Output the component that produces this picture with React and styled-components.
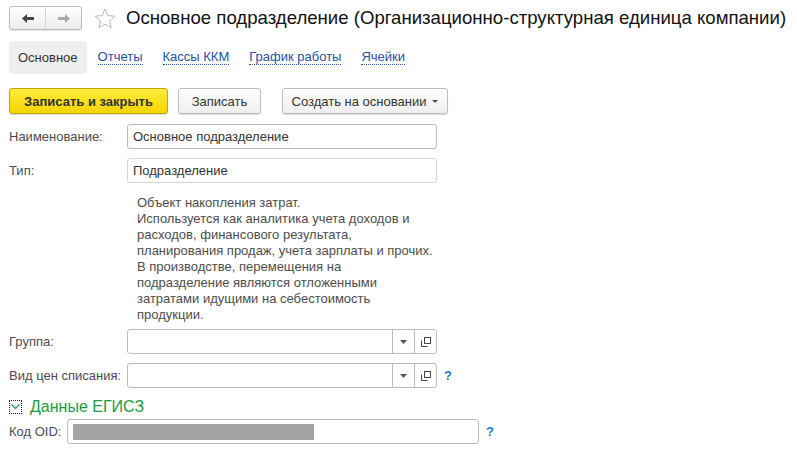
import React from 'react';
import styled, { createGlobalStyle } from 'styled-components';

const GlobalStyle = createGlobalStyle`
  body {
    margin: 0;
    background: #fff;
    font-family: "Liberation Sans", Arial, sans-serif;
    font-size: 13px;
    color: #4d4d4d;
  }
`;

const Page = styled.div`
  width: 797px;
  height: 453px;
  padding: 6px 0 0 9px;
  box-sizing: border-box;
  overflow: hidden;
`;

const Header = styled.div`
  display: flex;
  align-items: center;
  height: 24px;
`;

const NavGroup = styled.div`
  display: flex;
  width: 73px;
  height: 24px;
  box-sizing: border-box;
  border: 1px solid #bdbdbd;
  border-radius: 3px;
  background: linear-gradient(#ffffff, #ececec);
  box-shadow: 0 1px 1px rgba(0, 0, 0, 0.12);
`;

const NavButton = styled.div`
  flex: 1;
  display: flex;
  align-items: center;
  justify-content: center;
  & + & {
    border-left: 1px solid #d4d4d4;
  }
`;

const Star = styled.div`
  margin-left: 12px;
  display: flex;
`;

const Title = styled.h1`
  margin: 0 0 0 10px;
  font-size: 18.6px;
  font-weight: normal;
  color: #111;
  white-space: nowrap;
`;

const Tabs = styled.div`
  display: flex;
  align-items: center;
  margin-top: 11px;
  height: 33px;
`;

const Tab = styled.div`
  height: 33px;
  display: flex;
  align-items: center;
  padding: 0 9px 0 9px;
  border-radius: 3px;
  background: #efefef;
  color: #333;
`;

const TabLink = styled.a`
  margin-left: ${({ $gap }) => $gap}px;
  color: #2851a3;
  text-decoration: none;
  border-bottom: 1px dotted #2851a3;
  line-height: 14px;
`;

const Toolbar = styled.div`
  display: flex;
  margin-top: 14px;
  height: 26px;
`;

const Button = styled.div`
  height: 26px;
  box-sizing: border-box;
  display: flex;
  align-items: center;
  justify-content: center;
  width: ${({ $w }) => $w}px;
  margin-left: ${({ $ml }) => $ml || 0}px;
  border: 1px solid ${({ $primary }) => ($primary ? '#c2a700' : '#bdbdbd')};
  border-radius: 3px;
  background: ${({ $primary }) =>
    $primary ? 'linear-gradient(#ffec3d, #f5d400)' : 'linear-gradient(#ffffff, #efefef)'};
  box-shadow: 0 1px 1px rgba(0, 0, 0, 0.15);
  color: #333;
  font-weight: ${({ $primary }) => ($primary ? 'bold' : 'normal')};
  gap: 6px;
`;

const Caret = styled.span`
  width: 0;
  height: 0;
  border-left: 3px solid transparent;
  border-right: 3px solid transparent;
  border-top: 3px solid #555;
`;

const Row = styled.div`
  display: flex;
  align-items: center;
  margin-top: ${({ $mt }) => $mt}px;
  height: ${({ $h }) => $h || 25}px;
`;

const Label = styled.div`
  width: ${({ $w }) => $w || 118}px;
  flex-shrink: 0;
  color: #4d4d4d;
`;

const Input = styled.div`
  width: ${({ $w }) => $w || 310}px;
  height: 100%;
  box-sizing: border-box;
  border: 1px solid ${({ $strong }) => ($strong ? '#bcbcbc' : '#d6d6d6')};
  border-radius: 3px;
  display: flex;
  align-items: center;
  padding-left: 5px;
  color: #333;
`;

const Select = styled.div`
  width: 310px;
  height: 100%;
  box-sizing: border-box;
  border: 1px solid #bcbcbc;
  border-radius: 3px;
  display: flex;
`;

const SelectText = styled.div`
  flex: 1;
`;

const SelectBtn = styled.div`
  width: 21px;
  border-left: 1px solid #bcbcbc;
  display: flex;
  align-items: center;
  justify-content: center;
`;

const Help = styled.span`
  margin-left: ${({ $ml }) => $ml}px;
  color: #1f77c9;
  font-weight: bold;
  font-size: 13px;
`;

const Desc = styled.div`
  margin: 12px 0 0 128px;
  line-height: 16px;
  color: #4d4d4d;
`;

const Section = styled.div`
  display: flex;
  align-items: center;
  margin-top: 10px;
  height: 18px;
`;

const Check = styled.div`
  width: 13px;
  height: 14px;
  box-sizing: border-box;
  border: 1px dotted #222;
  display: flex;
  align-items: center;
  justify-content: center;
`;

const SectionTitle = styled.div`
  margin-left: 8px;
  font-size: 16px;
  color: #1a9c42;
`;

const Mask = styled.div`
  width: 241px;
  height: 16px;
  background: #a3a3a3;
`;

const CopyIcon = () => (
  <svg width="10" height="10" viewBox="0 0 10 10">
    <rect x="3.5" y="0.5" width="6" height="6" fill="none" stroke="#444" />
    <path d="M0.5 3.5v6h6" fill="none" stroke="#444" />
  </svg>
);

const SmallCaret = () => (
  <svg width="7" height="4" viewBox="0 0 7 4">
    <path d="M0 0h7L3.5 4z" fill="#555" />
  </svg>
);

const lines = [
  'Объект накопления затрат.',
  'Используется как аналитика учета доходов и',
  'расходов, финансового результата,',
  'планирования продаж, учета зарплаты и прочих.',
  'В производстве, перемещения на',
  'подразделение являются отложенными',
  'затратами идущими на себестоимость',
  'продукции.',
];

export default function App() {
  return (
    <Page>
      <GlobalStyle />
      <Header>
        <NavGroup>
          <NavButton>
            <svg width="12" height="9" viewBox="0 0 12 9">
              <path d="M0 4.5L5 0v3h7v3H5v3z" fill="#444" />
            </svg>
          </NavButton>
          <NavButton>
            <svg width="12" height="9" viewBox="0 0 12 9">
              <path d="M12 4.5L7 0v3H0v3h7v3z" fill="#a8a8a8" />
            </svg>
          </NavButton>
        </NavGroup>
        <Star>
          <svg width="22" height="21" viewBox="0 0 22 21">
            <path
              d="M11 1l2.9 6.6 7.1.6-5.4 4.7 1.6 7L11 16.2l-6.2 3.7 1.6-7L1 8.2l7.1-.6z"
              fill="none"
              stroke="#bbb"
              strokeWidth="1"
            />
          </svg>
        </Star>
        <Title>Основное подразделение (Организационно-структурная единица компании)</Title>
      </Header>

      <Tabs>
        <Tab>Основное</Tab>
        <TabLink $gap={11}>Отчеты</TabLink>
        <TabLink $gap={20}>Кассы ККМ</TabLink>
        <TabLink $gap={20}>График работы</TabLink>
        <TabLink $gap={20}>Ячейки</TabLink>
      </Tabs>

      <Toolbar>
        <Button $primary $w={159}>Записать и закрыть</Button>
        <Button $w={83} $ml={10}>Записать</Button>
        <Button $w={166} $ml={21}>
          Создать на основании <Caret />
        </Button>
      </Toolbar>

      <Row $mt={10}>
        <Label>Наименование:</Label>
        <Input $strong>Основное подразделение</Input>
      </Row>
      <Row $mt={9}>
        <Label>Тип:</Label>
        <Input>Подразделение</Input>
      </Row>

      <Desc>
        {lines.map((l) => (
          <div key={l}>{l}</div>
        ))}
      </Desc>

      <Row $mt={6} $h={25}>
        <Label>Группа:</Label>
        <Select>
          <SelectText />
          <SelectBtn><SmallCaret /></SelectBtn>
          <SelectBtn><CopyIcon /></SelectBtn>
        </Select>
      </Row>
      <Row $mt={9} $h={25}>
        <Label>Вид цен списания:</Label>
        <Select>
          <SelectText />
          <SelectBtn><SmallCaret /></SelectBtn>
          <SelectBtn><CopyIcon /></SelectBtn>
        </Select>
        <Help $ml={7}>?</Help>
      </Row>

      <Section>
        <Check>
          <svg width="9" height="6" viewBox="0 0 9 6">
            <path d="M0.5 0.5l4 4 4-4" fill="none" stroke="#1a9c42" strokeWidth="1.2" />
          </svg>
        </Check>
        <SectionTitle>Данные ЕГИСЗ</SectionTitle>
      </Section>

      <Row $mt={3}>
        <Label $w={58}>Код OID:</Label>
        <Input $strong $w={412}>
          <Mask />
        </Input>
        <Help $ml={7}>?</Help>
      </Row>
    </Page>
  );
}
